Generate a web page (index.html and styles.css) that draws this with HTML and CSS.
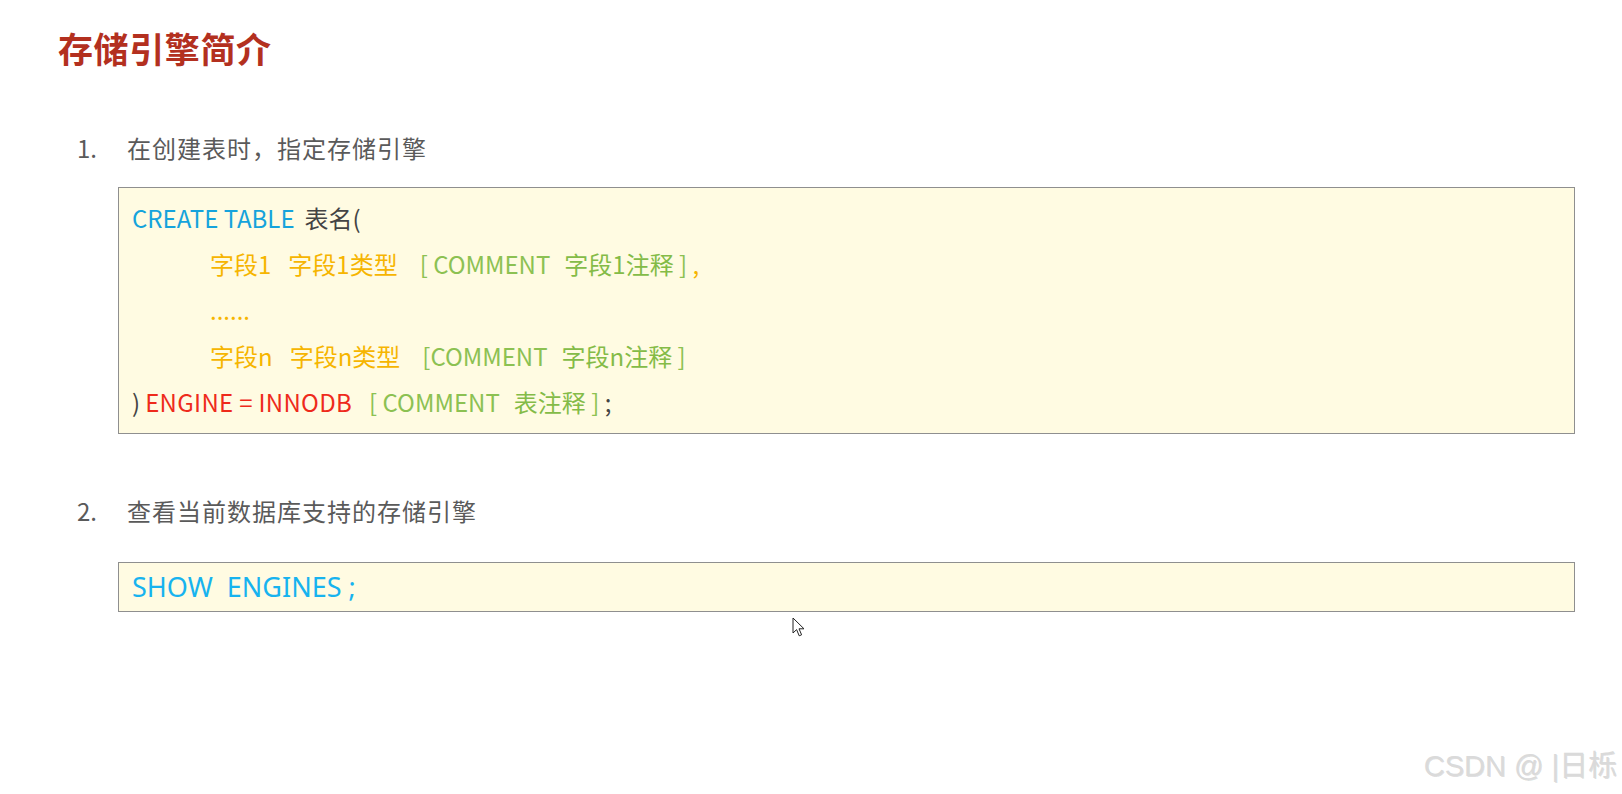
FILE: index.html
```html
<!DOCTYPE html>
<html lang="zh-CN">
<head>
<meta charset="utf-8">
<title>存储引擎简介</title>
<link rel="stylesheet" href="styles.css">
</head>
<body>
<div class="page">
  <h1 class="title">存储引擎简介</h1>

  <div class="step step-1">
    <span class="num">1.</span>
    <span class="label">在创建表时，指定存储引擎</span>
  </div>
  <div class="code code-create">
    <div class="line"><span class="kw">CREATE TABLE</span><span class="gap-md"></span><span class="dark">表名(</span></div>
    <div class="line indent"><span class="org">字段1</span><span class="gap"></span><span class="org">字段1类型</span><span class="gap-lg"></span><span class="grn">[ COMMENT</span><span class="gap-c"></span><span class="grn cjk">字段1注释</span><span class="grn"> ]</span><span class="org"> ,</span></div>
    <div class="line indent"><span class="org dots">......</span></div>
    <div class="line indent"><span class="org">字段n</span><span class="gap"></span><span class="org">字段n类型</span><span class="gap-lg"></span><span class="grn">[COMMENT</span><span class="gap-c"></span><span class="grn cjk">字段n注释</span><span class="grn"> ]</span></div>
    <div class="line"><span class="dark">)</span><span class="gap-sm"></span><span class="red">ENGINE = INNODB</span><span class="gap-e"></span><span class="grn">[ COMMENT</span><span class="gap-c"></span><span class="grn cjk">表注释</span><span class="grn"> ]</span><span class="dark"> ;</span></div>
  </div>

  <div class="step step-2">
    <span class="num">2.</span>
    <span class="label">查看当前数据库支持的存储引擎</span>
  </div>
  <div class="code code-show">
    <div class="line show"><span class="kw2">SHOW&nbsp;&nbsp;ENGINES ;</span></div>
  </div>
</div>

<div class="watermark">CSDN @ |日栎</div>

<svg class="cursor" width="14" height="21" viewBox="0 0 14 21" aria-hidden="true">
  <path d="M1 1 L1 16 L4.6 12.6 L7.2 18.8 L9.6 17.8 L7 11.8 L12 11.8 Z" fill="#ffffff" stroke="#222222" stroke-width="1" stroke-linejoin="round"/>
</svg>
</body>
</html>
```

FILE: styles.css
```css
html, body {
  margin: 0;
  padding: 0;
  background: #ffffff;
}

body {
  font-family: "Noto Sans CJK SC", "Noto Sans", sans-serif;
  color: #595959;
  width: 1622px;
  height: 794px;
  overflow: hidden;
  position: relative;
}

.page {
  display: flex;
  flex-direction: column;
  padding: 24px 47px 0 0;
}

.title {
  margin: 0;
  padding-left: 58px;
  font-size: 35px;
  line-height: 48px;
  font-weight: 700;
  color: #b3301f;
  letter-spacing: 0.6px;
}

.step {
  display: flex;
  align-items: center;
  padding-left: 77px;
  font-size: 24px;
  line-height: 30px;
  color: #5a5a5a;
}

.step .num {
  width: 50px;
}

.step .label {
  letter-spacing: 1px;
}

.step-1 {
  margin-top: 61px;
}

.step-2 {
  margin-top: 62px;
}

.code {
  margin-left: 118px;
  background: #fffbe2;
  border: 1px solid #8f8f8f;
  font-size: 24px;
}

.code-create {
  margin-top: 24px;
  padding: 7px 0 8px 13px;
}

.code-show {
  margin-top: 36px;
  padding: 0 0 0 13px;
}

.line {
  display: block;
  height: 46px;
  line-height: 46px;
  white-space: pre;
}

.line.indent {
  padding-left: 78px;
}

.line.show {
  height: 48px;
  line-height: 48px;
}

.gap,
.gap-c,
.gap-e,
.gap-sm,
.gap-md,
.gap-lg {
  display: inline-block;
  height: 1px;
}

.gap {
  width: 17px;
}

.gap-c {
  width: 14px;
}

.gap-e {
  width: 17px;
}

.gap-sm {
  width: 5px;
}

.gap-md {
  width: 10px;
}

.gap-lg {
  width: 22px;
}

.kw {
  color: #15a3dc;
}

.kw2 {
  font-family: "Noto Sans", "Noto Sans CJK SC", sans-serif;
  color: #17b3ef;
  font-size: 27px;
}

.dark {
  color: #444444;
}

.org {
  color: #f6b500;
}

.grn {
  color: #8cc152;
}

.grn.cjk {
  color: #84bb47;
}

.red {
  color: #ee2a1b;
  letter-spacing: 0.3px;
}

.watermark {
  position: absolute;
  right: 5px;
  top: 748px;
  font-family: "Liberation Sans", "Noto Sans CJK SC", sans-serif;
  font-size: 29px;
  line-height: 36px;
  color: #dadada;
  text-shadow: 1px 1px 0 rgba(0, 0, 0, 0.12);
}

.cursor {
  position: absolute;
  left: 792px;
  top: 617px;
}
```
